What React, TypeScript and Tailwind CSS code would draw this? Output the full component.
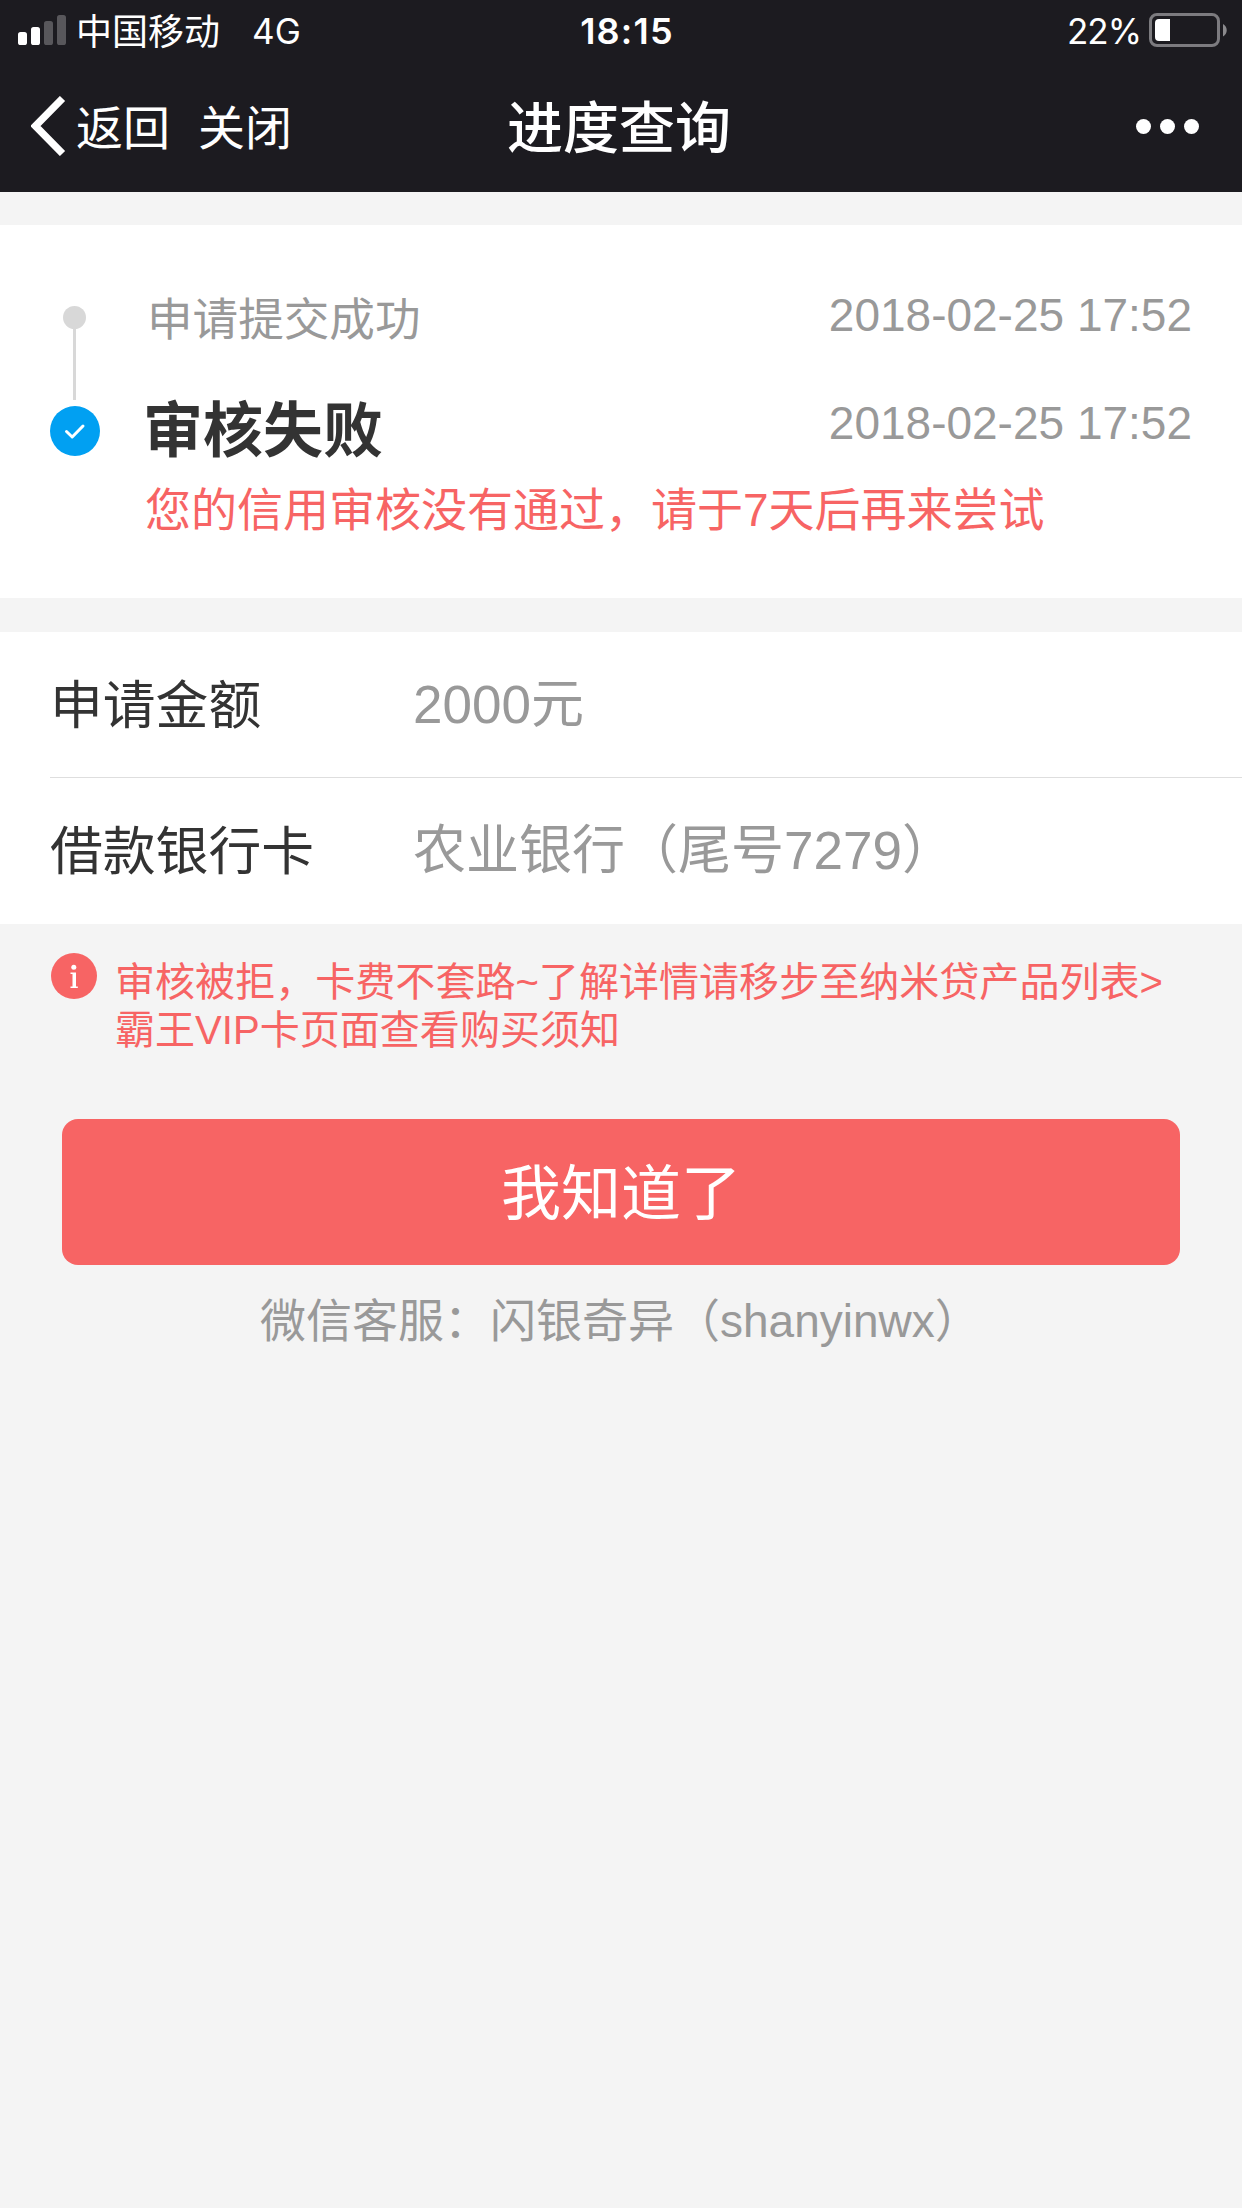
import React from "react";

const SignalBars = () => (
  <svg className="block" width="48" height="30" viewBox="0 0 48 30">
    <rect x="0" y="17" width="9" height="13" rx="2.6" fill="#fff" />
    <rect x="13" y="12" width="9" height="18" rx="2.6" fill="#fff" />
    <rect x="26" y="6" width="9" height="24" rx="2.6" fill="#58575b" />
    <rect x="39" y="0" width="9" height="30" rx="2.6" fill="#58575b" />
  </svg>
);

const Battery = () => (
  <svg className="block" width="79" height="34" viewBox="0 0 79 34">
    <rect x="1.5" y="1.5" width="68" height="31" rx="6.5" fill="none" stroke="#7c7b7f" strokeWidth="3" />
    <path d="M21 6H10a4 4 0 0 0-4 4v14a4 4 0 0 0 4 4h11z" fill="#fff" />
    <path d="M74 11c5 2.5 5 10 0 12.500z" fill="#8b8a8d" />
  </svg>
);

const BackChevron = () => (
  <svg className="block" width="35" height="60" viewBox="0 0 35 60" fill="none">
    <path d="M31.500 2.500L4.500 30l27 27.500" stroke="#fff" strokeWidth="7.300" />
  </svg>
);

const StatusBar = () => (
  <div className="grid h-[60px] grid-cols-3 font-[Inter,'Noto_Sans_CJK_SC',sans-serif] text-[35px] leading-[62px]">
    <div className="flex pl-[18px]">
      <div className="pt-[15px]">
        <SignalBars />
      </div>
      <span className="ml-[10px] text-[36px] leading-[64px]">中国移动</span>
      <span className="ml-[32px]">4G</span>
    </div>
    <div className="pl-[12px] text-center text-[36px] font-semibold tracking-[1.2px]">18:15</div>
    <div className="flex justify-end pr-[14px]">
      <span className="tracking-[-1px]">22%</span>
      <div className="ml-[8px] pt-[13px]">
        <Battery />
      </div>
    </div>
  </div>
);

const NavBar = () => (
  <div className="grid h-[132px] grid-cols-3 items-center">
    <div className="flex items-center pl-[31px] text-[47px] leading-[64px]">
      <BackChevron />
      <span className="ml-[10px] pt-[6px]">返回</span>
      <span className="ml-[28px] pt-[6px]">关闭</span>
    </div>
    <div className="pt-[6px] pr-[4px] text-center text-[56px] leading-[72px] font-medium">进度查询</div>
    <div className="flex justify-end gap-[9px] pr-[43px]">
      <i className="size-[15px] rounded-full bg-white" />
      <i className="size-[15px] rounded-full bg-white" />
      <i className="size-[15px] rounded-full bg-white" />
    </div>
  </div>
);

const Timeline = () => (
  <section className="mt-[33px] flex h-[373px] bg-white pr-[50px] pl-[50px]">
    <div className="flex w-[50px] flex-col items-start pt-[81px]">
      <div className="ml-[13px] size-[23px] shrink-0 rounded-full bg-[#d8d8d8]" />
      <div className="ml-[23px] h-[71px] w-[3px] shrink-0 bg-[#d8d8d8]" />
      <div className="mt-[6px] size-[50px] shrink-0 rounded-full bg-[#01a0f2]">
        <svg className="block" width="50" height="50" viewBox="0 0 50 50" fill="none">
          <path d="M16.500 25.500l5.700 5.500L33 20" stroke="#fff" strokeWidth="3" strokeLinecap="round" strokeLinejoin="round" />
        </svg>
      </div>
    </div>
    <div className="ml-[46px] flex-1 pt-[58px] text-[46px] leading-[64px] text-[#999]">
      <div className="flex h-[68px] justify-between">
        <span className="ml-[1px] pt-[6px] text-[45.6px]">申请提交成功</span>
        <span>2018-02-25 17:52</span>
      </div>
      <div className="mt-[40px] flex h-[80px] justify-between">
        <span className="-ml-[3px] pt-[1px] text-[60px] leading-[80px] font-bold text-[#333]">审核失败</span>
        <span>2018-02-25 17:52</span>
      </div>
      <p className="mt-[7px] -ml-[1px] text-[#f76464]">您的信用审核没有通过，请于7天后再来尝试</p>
    </div>
  </section>
);

const Row = ({ label, value }: { label: string; value: string }) => (
  <div className="flex h-[146px] items-center text-[53px] leading-[72px]">
    <dt className="w-[363px] pt-[2px] text-[52.8px] text-[#333]">{label}</dt>
    <dd className="text-[#999]">{value}</dd>
  </div>
);

export default function App() {
  return (
    <div className="h-[2208px] w-[1242px] overflow-hidden bg-[#f4f4f4] font-['Liberation_Sans','Noto_Sans_CJK_SC',sans-serif] whitespace-nowrap">
      <header className="h-[192px] bg-[#1c1b20] text-white">
        <StatusBar />
        <NavBar />
      </header>
      <Timeline />
      <dl className="mt-[34px] h-[292px] bg-white pl-[50px]">
        <Row label="申请金额" value="2000元" />
        <div className="-mt-px h-px bg-[#dedede]" />
        <Row label="借款银行卡" value="农业银行（尾号7279）" />
      </dl>
      <div className="flex pt-[29px] pl-[51px] text-[40.05px] leading-[48px] text-[#f76464]">
        <svg className="block" width="46" height="46" viewBox="0 0 46 46">
          <circle cx="23" cy="23" r="23" fill="#f76464" />
          <circle cx="22.800" cy="14.300" r="2.500" fill="#fff" />
          <path d="M19.500 19.500h5.500v14h1.800V35h-7.300v-1.500h2V21h-2z" fill="#fff" />
        </svg>
        <p className="ml-[18px] pt-[5px]">
          审核被拒，卡费不套路~了解详情请移步至纳米贷产品列表&gt;
          <br />
          霸王VIP卡页面查看购买须知
        </p>
      </div>
      <button className="mx-[62px] mt-[65px] block h-[146px] w-[1118px] rounded-[16px] bg-[#f76464] pt-[5px] text-[60px] leading-[141px] text-white">
        我知道了
      </button>
      <p className="mt-[24px] pl-[260px] text-[46px] leading-[64px] text-[#999]">微信客服：闪银奇异（shanyinwx）</p>
    </div>
  );
}
